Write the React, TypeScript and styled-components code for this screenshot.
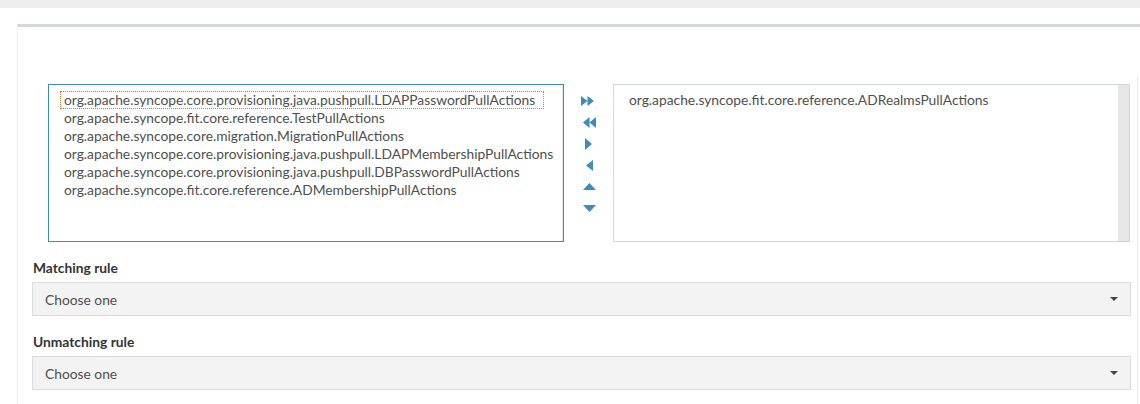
import React from "react";
import styled, { createGlobalStyle } from "styled-components";

const GlobalStyle = createGlobalStyle`
  html, body { margin: 0; padding: 0; background: #fff; overflow: hidden; }
  body { font-family: Lato, "Liberation Sans", sans-serif; font-size: 13.8px; color: #555; }
`;

const TopBar = styled.div`
  height: 8px;
  background: #eeeeee;
`;

const Page = styled.div`
  padding: 16px 0 0 17px;
`;

const Panel = styled.div`
  border-top: 3px solid #d2d6de;
  border-left: 1px solid #f1f1f1;
  min-height: 380px;
`;

const Content = styled.div`
  margin: 50px 2px 0 0;
  padding: 7px 6px 0 14px;
  border-right: 1px solid #ebebeb;
  min-height: 330px;
`;

const Palette = styled.div`
  display: flex;
  margin: 0 0 16px 16px;
`;

const ListBox = styled.div<{ $focused?: boolean; $w: number }>`
  box-sizing: border-box;
  width: ${(p) => p.$w}px;
  height: 158px;
  border: 1px solid ${(p) => (p.$focused ? "#3c8dbc" : "#d2d6de")};
  display: flex;
  background: #fff;
`;

const Items = styled.ul<{ $pl: number }>`
  flex: 1;
  list-style: none;
  margin: 0;
  padding: 6px 0 0 ${(p) => p.$pl}px;
`;

const Item = styled.li<{ $focused?: boolean }>`
  display: block;
  width: fit-content;
  line-height: 18px;
  height: 18px;
  padding: 0 9px 0 4px;
  white-space: nowrap;
  color: #4f4f4f;
  outline: ${(p) => (p.$focused ? "1px dotted #e5723a" : "none")};
  outline-offset: -1px;
`;

const Track = styled.div`
  width: 11px;
  background: #e6e6e6;
`;

const Buttons = styled.div`
  width: 49px;
  display: flex;
  flex-direction: column;
  align-items: center;
  padding-top: 6px;
`;

const MoveButton = styled.button<{ $dx: number }>`
  height: 21.5px;
  width: 20px;
  padding: 0;
  border: 0;
  background: none;
  display: flex;
  align-items: center;
  justify-content: center;
  color: #3c8dbc;
  transform: translateX(${(p) => p.$dx}px);
  svg { display: block; fill: currentColor; flex: none; }
`;

const FormGroup = styled.div`
  margin-bottom: 16px;
`;

const Label = styled.label`
  display: block;
  font-weight: 700;
  color: #333;
  line-height: 19px;
  margin-bottom: 5px;
  padding-left: 1px;
`;

const Select = styled.div`
  box-sizing: border-box;
  height: 34px;
  background: #f3f3f3;
  border: 1px solid #dcdcdc;
  display: flex;
  align-items: center;
  justify-content: space-between;
  padding: 0 12px 0 12px;
  color: #4f4f4f;
`;

const Caret = styled.span`
  width: 0;
  height: 0;
  border-left: 4px solid transparent;
  border-right: 4px solid transparent;
  border-top: 4px solid #444;
`;

const available = [
  "org.apache.syncope.core.provisioning.java.pushpull.LDAPPasswordPullActions",
  "org.apache.syncope.fit.core.reference.TestPullActions",
  "org.apache.syncope.core.migration.MigrationPullActions",
  "org.apache.syncope.core.provisioning.java.pushpull.LDAPMembershipPullActions",
  "org.apache.syncope.core.provisioning.java.pushpull.DBPasswordPullActions",
  "org.apache.syncope.fit.core.reference.ADMembershipPullActions",
];
const selected = ["org.apache.syncope.fit.core.reference.ADRealmsPullActions"];

const icons: { dx: number; w: number; h: number; d: string; t: string }[] = [
  { dx: -1, w: 13, h: 10, d: "M0 0L6.5 5L0 10ZM6.5 0L13 5L6.5 10Z", t: "Add all" },
  { dx: 1, w: 13, h: 11, d: "M6.5 0L0 5.5L6.5 11ZM13 0L6.5 5.5L13 11Z", t: "Remove all" },
  { dx: 0, w: 7, h: 12, d: "M0 0L7 6L0 12Z", t: "Add" },
  { dx: 1, w: 7, h: 11, d: "M7 0L0 5.5L7 11Z", t: "Remove" },
  { dx: 1, w: 13, h: 7, d: "M0 7L6.5 0L13 7Z", t: "Up" },
  { dx: 1, w: 13, h: 7, d: "M0 0L13 0L6.5 7Z", t: "Down" },
];

export default function App() {
  return (
    <>
      <GlobalStyle />
      <TopBar />
      <Page>
        <Panel>
          <Content>
            <Palette>
              <ListBox $focused $w={516}>
                <Items $pl={11}>
                  {available.map((a, i) => (
                    <Item key={a} $focused={i === 0}>{a}</Item>
                  ))}
                </Items>
                <Track />
              </ListBox>
              <Buttons>
                {icons.map((ic) => (
                  <MoveButton key={ic.t} $dx={ic.dx} title={ic.t}>
                    <svg width={ic.w} height={ic.h} viewBox={`0 0 ${ic.w} ${ic.h}`}>
                      <path d={ic.d} />
                    </svg>
                  </MoveButton>
                ))}
              </Buttons>
              <ListBox $w={517}>
                <Items $pl={11}>
                  {selected.map((a) => (
                    <Item key={a}>{a}</Item>
                  ))}
                </Items>
                <Track />
              </ListBox>
            </Palette>
            <FormGroup>
              <Label>Matching rule</Label>
              <Select>
                <span>Choose one</span>
                <Caret />
              </Select>
            </FormGroup>
            <FormGroup>
              <Label>Unmatching rule</Label>
              <Select>
                <span>Choose one</span>
                <Caret />
              </Select>
            </FormGroup>
          </Content>
        </Panel>
      </Page>
    </>
  );
}
